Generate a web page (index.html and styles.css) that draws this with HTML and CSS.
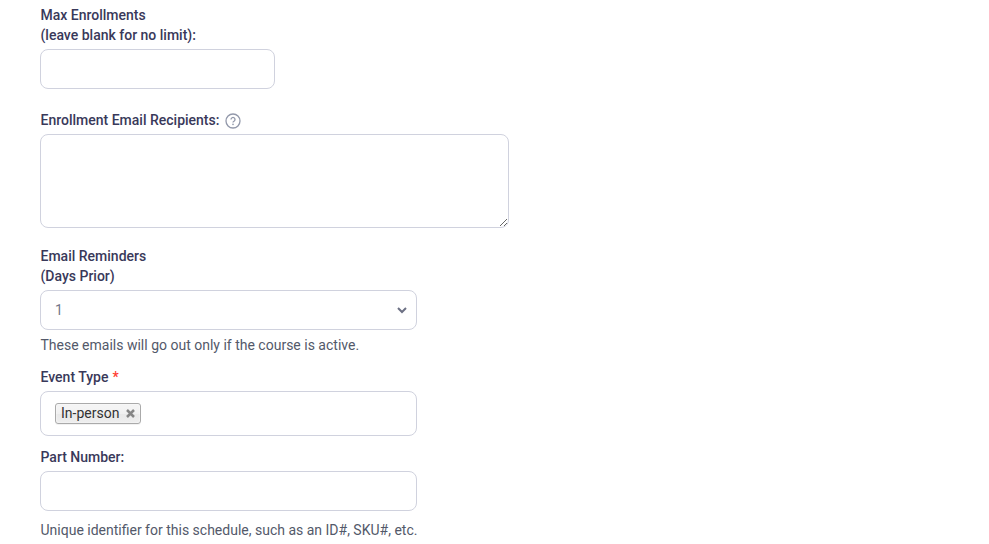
FILE: index.html
```html
<!DOCTYPE html>
<html lang="en">
<head>
<meta charset="utf-8">
<title>Schedule</title>
<link rel="stylesheet" href="styles.css">
</head>
<body>
<form class="form">
  <div class="field enrollments">
    <label class="label" for="max">Max Enrollments<br>(leave blank for no limit):</label>
    <input class="control short" id="max" type="text">
  </div>
  <div class="field recipients">
    <label class="label" for="recipients">Enrollment Email Recipients:
      <svg class="help" viewBox="0 0 16 16"><circle cx="8" cy="8" r="7"/><path d="M6 6.4a2 2 0 1 1 3 1.8c-.7.4-1 .7-1 1.2"/><circle class="dot" cx="8" cy="11.4" r=".8"/></svg>
    </label>
    <textarea class="control area" id="recipients"></textarea>
  </div>
  <div class="field reminders">
    <label class="label">Email Reminders<br>(Days Prior)</label>
    <div class="control select">1
      <svg class="chevron" viewBox="0 0 10 7"><path d="M1 1l4 4 4-4"/></svg>
    </div>
    <p class="hint">These emails will go out only if the course is active.</p>
  </div>
  <div class="field event">
    <label class="label">Event Type <span class="required">*</span></label>
    <div class="control tags"><span class="tag">In-person <svg class="remove" viewBox="0 0 9 9"><path d="M1 1l7 7M8 1L1 8"/></svg></span></div>
  </div>
  <div class="field part">
    <label class="label" for="part">Part Number:</label>
    <input class="control" id="part" type="text">
    <p class="hint">Unique identifier for this schedule, such as an ID#, SKU#, etc.</p>
  </div>
</form>
</body>
</html>
```
FILE: styles.css
```css
* { box-sizing: border-box; }
body {
  margin: 0;
  background: #fff;
  color: #39395a;
  font: 14px/20px Roboto, sans-serif;
  overflow: hidden;
}
.form { padding: 5px 40px 0; }
.label { display: flex; font-weight: 500; margin-bottom: 4px; padding-left: .5px; }
.enrollments .label, .reminders .label { display: block; }
.control {
  display: block;
  width: 377px;
  height: 40px;
  margin: 0;
  padding: 0 15px;
  border: 1px solid #d0d2de;
  border-radius: 8px;
  background: #fff;
  outline: none;
}
.short { width: 235px; }
.area { width: 469px; height: 94px; resize: both; }
.enrollments { margin-bottom: 21px; }
.recipients { margin-bottom: 18px; }
.reminders { margin-bottom: 12px; }
.event { margin-bottom: 11px; }
.help {
  width: 16px;
  height: 16px;
  margin: 3px 0 0 5.5px;
  fill: none;
  stroke: #9298aa;
  stroke-width: 1.3;
}
.help .dot { fill: #9298aa; stroke: none; }
.select { display: flex; align-items: center; justify-content: space-between; padding: 0 9px 0 14px; color: #71778a; }
.chevron { width: 10px; height: 7px; fill: none; stroke: #6c7084; stroke-width: 2; }
.hint { margin: 5px 0 0; padding-left: .5px; color: #53596a; }
.part .hint { margin-top: 9px; }
.required { margin-left: 4px; color: #ff3b30; }
.tags { height: 45px; padding: 11px 14px; }
.tag {
  display: flex;
  align-items: center;
  width: 86px;
  height: 21px;
  padding: 0 5px;
  border: 1px solid #aaa;
  border-radius: 3px;
  background: linear-gradient(#f4f4f4 20%, #f0f0f0 50%, #e8e8e8 52%, #eee);
  box-shadow: inset 0 0 2px #fff, 0 1px 0 rgba(0, 0, 0, .05);
  color: #333;
  line-height: 17px;
  padding-bottom: 1px;
}
.remove { width: 9px; height: 9px; margin: 1px 0 0 auto; stroke: #858585; stroke-width: 2.5; }
```
